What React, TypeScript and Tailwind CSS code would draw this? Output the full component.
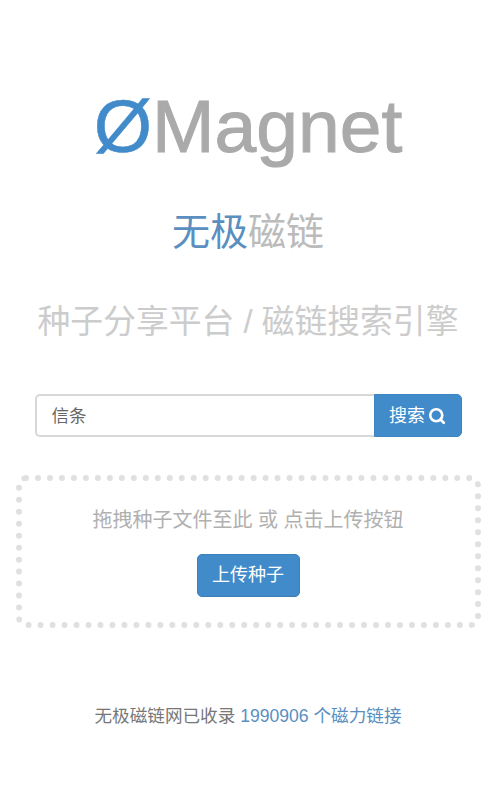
import { Search } from "lucide-react";

const font = "font-['Liberation_Sans','Noto_Sans_CJK_SC',sans-serif]";

const App = () => {
  return (
    <div className={`${font} min-h-[800px] bg-white flex flex-col items-center pt-[84px] text-[#555]`}>
      {/* logo */}
      <h1 className="text-[75px] leading-[85px] text-[#aaaaaa] [-webkit-text-stroke:1px_#aaaaaa]">
        <span className="text-[#428bca] [-webkit-text-stroke:0.5px_#428bca]">Ø</span>Magnet
      </h1>
      <h2 className="mt-[34px] text-[38px] leading-[58px] text-[#bbbbbb]">
        <span className="text-[#5a8fc0]">无极</span>磁链
      </h2>
      <h3 className="mt-[36px] text-[32.8px] leading-[50px] text-[#cccccc]">
        种子分享平台 / 磁链搜索引擎
      </h3>

      {/* search */}
      <div className="mt-[47px] w-[427px] h-[43px] flex">
        <input
          readOnly
          value="信条"
          className="flex-1 min-w-0 h-full border-2 border-r-0 border-[#d8d8d8] rounded-l-[5px] px-[15px] pb-[2px] text-[17.5px] text-[#666] outline-none"
        />
        <button className="w-[88px] h-full bg-[#428bca] border border-[#3d84c2] rounded-r-[5px] text-white text-[18px] flex items-center justify-center gap-[3px] pt-[1px]">
          搜索
          <Search size={18} strokeWidth={3.5} />
        </button>
      </div>

      {/* upload */}
      <div className="mt-[38px] w-[465px] h-[153px] border-[6px] border-dotted border-[#e0e0e0] rounded-[10px] flex flex-col items-center pt-[25px]">
        <p className="text-[20px] leading-[28px] text-[#b0b0b0]">拖拽种子文件至此 或 点击上传按钮</p>
        <button className="mt-[20px] w-[103px] h-[43px] bg-[#428bca] border border-[#3d7fb8] rounded-[5px] text-white text-[18px]">
          上传种子
        </button>
      </div>

      <p className="mt-[76px] text-[17.6px] leading-[24px] text-[#777]">
        无极磁链网已收录 <a className="text-[#5a8fc0]">1990906 个磁力链接</a>
      </p>
    </div>
  );
};

export default App;
